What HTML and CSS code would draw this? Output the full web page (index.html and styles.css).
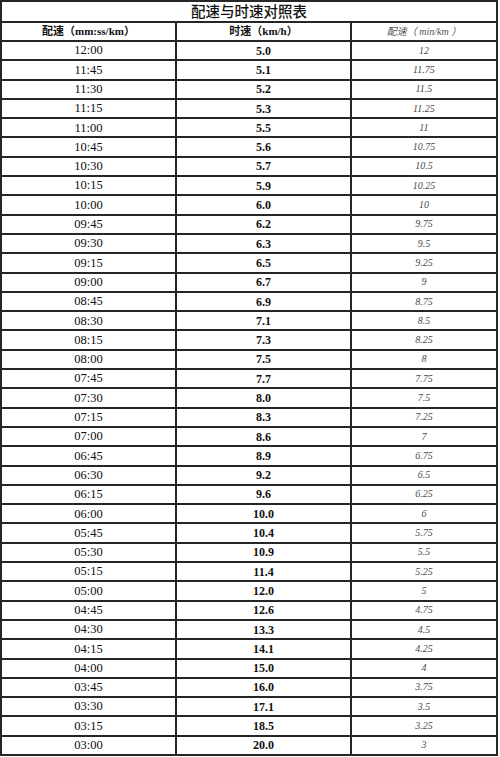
FILE: index.html
```html
<!DOCTYPE html>
<html lang="zh-CN">
<head>
<meta charset="utf-8">
<title>配速与时速对照表</title>
<link rel="stylesheet" href="styles.css">
</head>
<body>
<div class="sheet">
  <div class="title">配速与时速对照表</div>
  <div class="h h1">配速（mm:ss/km）</div>
  <div class="h h2">时速（km/h）</div>
  <div class="h h3">配速（ min/km ）</div>
  <div class="c1">12:00</div><div class="c2">5.0</div><div class="c3">12</div>
  <div class="c1">11:45</div><div class="c2">5.1</div><div class="c3">11.75</div>
  <div class="c1">11:30</div><div class="c2">5.2</div><div class="c3">11.5</div>
  <div class="c1">11:15</div><div class="c2">5.3</div><div class="c3">11.25</div>
  <div class="c1">11:00</div><div class="c2">5.5</div><div class="c3">11</div>
  <div class="c1">10:45</div><div class="c2">5.6</div><div class="c3">10.75</div>
  <div class="c1">10:30</div><div class="c2">5.7</div><div class="c3">10.5</div>
  <div class="c1">10:15</div><div class="c2">5.9</div><div class="c3">10.25</div>
  <div class="c1">10:00</div><div class="c2">6.0</div><div class="c3">10</div>
  <div class="c1">09:45</div><div class="c2">6.2</div><div class="c3">9.75</div>
  <div class="c1">09:30</div><div class="c2">6.3</div><div class="c3">9.5</div>
  <div class="c1">09:15</div><div class="c2">6.5</div><div class="c3">9.25</div>
  <div class="c1">09:00</div><div class="c2">6.7</div><div class="c3">9</div>
  <div class="c1">08:45</div><div class="c2">6.9</div><div class="c3">8.75</div>
  <div class="c1">08:30</div><div class="c2">7.1</div><div class="c3">8.5</div>
  <div class="c1">08:15</div><div class="c2">7.3</div><div class="c3">8.25</div>
  <div class="c1">08:00</div><div class="c2">7.5</div><div class="c3">8</div>
  <div class="c1">07:45</div><div class="c2">7.7</div><div class="c3">7.75</div>
  <div class="c1">07:30</div><div class="c2">8.0</div><div class="c3">7.5</div>
  <div class="c1">07:15</div><div class="c2">8.3</div><div class="c3">7.25</div>
  <div class="c1">07:00</div><div class="c2">8.6</div><div class="c3">7</div>
  <div class="c1">06:45</div><div class="c2">8.9</div><div class="c3">6.75</div>
  <div class="c1">06:30</div><div class="c2">9.2</div><div class="c3">6.5</div>
  <div class="c1">06:15</div><div class="c2">9.6</div><div class="c3">6.25</div>
  <div class="c1">06:00</div><div class="c2">10.0</div><div class="c3">6</div>
  <div class="c1">05:45</div><div class="c2">10.4</div><div class="c3">5.75</div>
  <div class="c1">05:30</div><div class="c2">10.9</div><div class="c3">5.5</div>
  <div class="c1">05:15</div><div class="c2">11.4</div><div class="c3">5.25</div>
  <div class="c1">05:00</div><div class="c2">12.0</div><div class="c3">5</div>
  <div class="c1">04:45</div><div class="c2">12.6</div><div class="c3">4.75</div>
  <div class="c1">04:30</div><div class="c2">13.3</div><div class="c3">4.5</div>
  <div class="c1">04:15</div><div class="c2">14.1</div><div class="c3">4.25</div>
  <div class="c1">04:00</div><div class="c2">15.0</div><div class="c3">4</div>
  <div class="c1">03:45</div><div class="c2">16.0</div><div class="c3">3.75</div>
  <div class="c1">03:30</div><div class="c2">17.1</div><div class="c3">3.5</div>
  <div class="c1">03:15</div><div class="c2">18.5</div><div class="c3">3.25</div>
  <div class="c1">03:00</div><div class="c2">20.0</div><div class="c3">3</div>
</div>
</body>
</html>
```
FILE: styles.css
```css
html, body {
  margin: 0;
  padding: 0;
  background: #ffffff;
}
.sheet {
  box-sizing: border-box;
  width: 498px;
  height: 756px;
  padding: 2px;
  background: #262626;
  display: grid;
  grid-template-columns: 173px 173px 144px;
  grid-template-rows: 19px 17px repeat(37, 1fr);
  gap: 2px;
  font-family: "Liberation Serif", "Noto Sans CJK SC", serif;
  color: #111;
}
.sheet > div {
  background: #ffffff;
  display: flex;
  align-items: center;
  justify-content: center;
  white-space: pre;
  line-height: 1;
}
.title {
  grid-column: 1 / 4;
  font-family: "Noto Sans CJK SC", sans-serif;
  font-size: 14.5px;
  font-weight: 500;
  color: #111;
}
.h {
  font-size: 11px;
  font-weight: bold;
}
.h3 {
  font-weight: normal;
  font-style: italic;
  color: #555;
  font-size: 10px;
}
.c1 {
  font-size: 12.5px;
  color: #0c0c0c;
}
.c2 {
  font-size: 12px;
  font-weight: bold;
}
.c3 {
  font-size: 10px;
  font-style: italic;
  color: #4a4a4a;
}
```
